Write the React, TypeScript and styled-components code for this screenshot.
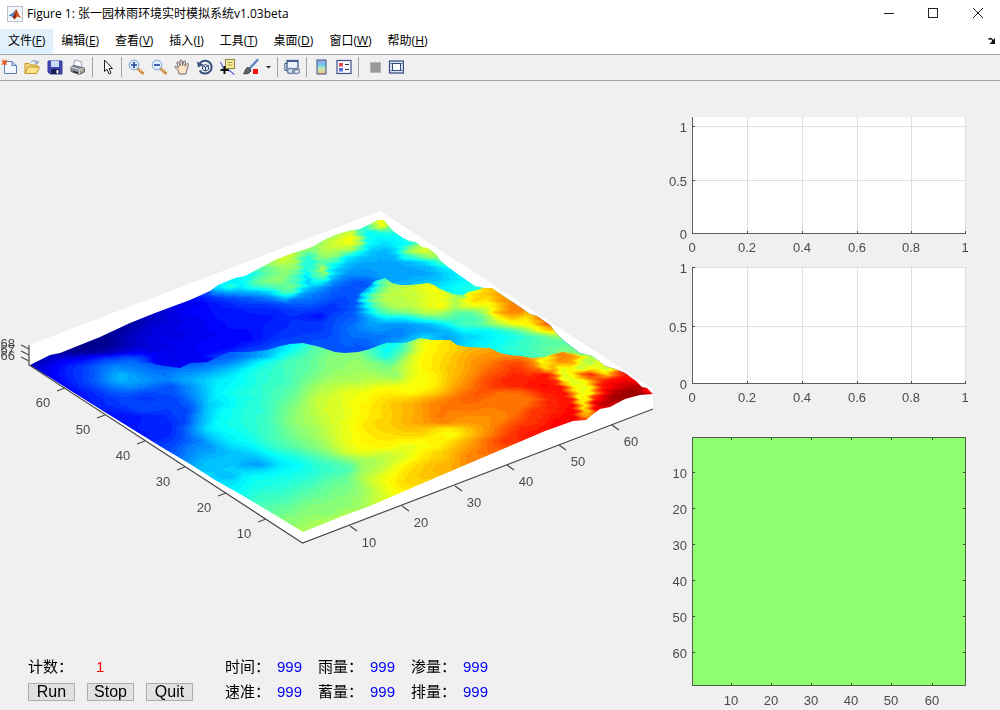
import React, { useLayoutEffect, useRef } from "react";
import styled, { createGlobalStyle } from "styled-components";

const GlobalStyle = createGlobalStyle`
  *, *::before, *::after { box-sizing: border-box; }
  body {
    margin: 0;
    background: #f0f0f0;
    color: #000;
    font-family: "Open Sans", "Noto Sans CJK SC", sans-serif;
    font-size: 12px;
  }
`;

/* ---------- window chrome ---------- */

const TitleBar = styled.header`
  display: flex;
  align-items: center;
  height: 28px;
  padding-left: 7px;
  background: #fff;
`;

const WindowTitle = styled.h1`
  flex: 1;
  margin: 0 0 0 4px;
  font-size: 12px;
  font-weight: 400;
  line-height: 16px;
  white-space: nowrap;
`;

const WindowButton = styled.button`
  display: grid;
  place-items: center;
  align-self: flex-start;
  width: 45px;
  height: 26px;
  padding: 0;
  border: 0;
  background: transparent;
`;

const MenuBar = styled.nav`
  display: flex;
  align-items: center;
  height: 27px;
  background: #fff;
  border-bottom: 1px solid #a8a8a8;
`;

const MenuItem = styled.button<{ $active?: boolean }>`
  height: 25px;
  padding: 0 8px;
  border: 0;
  background: ${(p) => (p.$active ? "#e0f0fd" : "transparent")};
  color: #000;
  font: inherit;
  line-height: 16px;
  white-space: nowrap;
`;

const DockButton = styled.button`
  display: grid;
  place-items: center;
  width: 16px;
  height: 16px;
  margin-left: auto;
  padding: 0;
  border: 0;
  background: transparent;
`;

const ToolBar = styled.div`
  display: flex;
  align-items: center;
  gap: 7px;
  height: 26px;
  padding: 0 0 2px 1px;
  border-bottom: 1px solid #a0a0a0;
`;

const ToolButton = styled.button<{ $narrow?: boolean }>`
  display: grid;
  place-items: center;
  width: ${(p) => (p.$narrow ? 5 : 16)}px;
  height: 20px;
  padding: 0;
  border: 0;
  background: transparent;
`;

const Separator = styled.span`
  width: 1px;
  height: 20px;
  margin: 0 -1px;
  background: #a5a5a5;
`;

/* ---------- figure ---------- */

const Figure = styled.main`
  display: grid;
  grid-template-columns: 33fr 17fr;
  align-items: start;
`;

const Column = styled.div`
  display: flex;
  flex-direction: column;
  min-width: 0;
`;

const SurfacePlot = styled.div`
  display: grid;

  > * {
    grid-area: 1 / 1;
    display: block;
    width: 100%;
    height: auto;
  }
`;

const Drawing = styled.svg`
  display: block;
  width: 100%;
  height: auto;
`;

const Tick = styled.text`
  fill: #4a4a4a;
  font-family: "Liberation Sans", Arial, sans-serif;
  font-size: 13px;
`;

const Panel = styled.section`
  display: flex;
  gap: 32px;
  padding: 13px 0 0 28px;
  font-family: "Liberation Sans", "Noto Sans CJK SC", sans-serif;
  font-size: 15px;
  line-height: 18px;
`;

const Controls = styled.div`
  display: grid;
  grid-template-rows: 25px 25px;
  align-items: center;
`;

const ButtonRow = styled.div`
  display: flex;
  gap: 12px;
`;

const PushButton = styled.button`
  width: 47px;
  height: 18px;
  padding: 0;
  border: 1px solid #adadad;
  background: #e1e1e1;
  color: #000;
  font: 16px/16px "Liberation Sans", Arial, sans-serif;
`;

const Readouts = styled.div`
  display: grid;
  grid-template: 25px 25px / repeat(3, 93px);
  align-items: center;
`;

const Readout = styled.label<{ $wide?: boolean }>`
  display: grid;
  grid-template-columns: ${(p) => (p.$wide ? 68 : 52)}px auto;
  justify-content: start;
  white-space: nowrap;
`;

const Value = styled.output<{ $tone: string }>`
  color: ${(p) => p.$tone};
`;

/* ---------- terrain data ---------- */

type Sample = [number, number];
type Field = [number, Sample[]][];

const parse = (rows: string): Field =>
  rows
    .trim()
    .split("\n")
    .map((line) => {
      const [y, rest] = line.trim().split("|");
      const samples = rest
        .trim()
        .split(" ")
        .map((pair) => pair.split(",").map(Number) as Sample);
      return [Number(y), samples];
    });

/* Each line: y | x,height x,height ... with the height in percent of the range. */
const BACK = parse(`
220| 375,55 381,62 386,58
226| 365,42 375,55 381,62 388,52 395,42
232| 335,52 345,56 352,57 358,45 368,38 385,42 395,40
238| 320,52 335,57 350,62 358,56 366,40 380,37 400,38 408,40
244| 312,54 318,52 330,58 350,60 360,52 367,38 385,35 405,37 415,47 420,52
250| 295,56 305,52 315,50 320,55 335,54 350,52 358,42 370,33 385,31 395,34 403,44 410,55 425,60 430,56
256| 275,57 290,58 300,48 308,42 318,50 325,52 338,48 345,38 360,33 380,30 395,31 402,38 415,45 430,55 437,52
262| 268,52 280,57 295,54 303,42 312,40 318,46 325,44 335,40 345,33 360,30 380,29 400,29 415,31 430,37 440,45
268| 258,44 270,48 285,53 297,50 305,40 315,44 322,56 328,40 335,33 350,29 375,28 400,28 425,30 445,36
274| 248,37 258,42 270,48 285,52 298,44 306,36 313,44 325,50 330,36 345,27 365,27 385,28 402,29 425,29 445,33 460,36
280| 235,36 245,38 255,46 265,50 280,52 290,46 300,42 307,32 315,40 325,38 332,28 345,24 355,22 365,22 380,27 420,31 450,34 470,37
286| 218,36 230,42 240,35 252,42 262,44 280,47 292,50 303,38 310,32 318,30 325,26 340,22 355,21 375,22 400,31 430,34 455,37 480,42
292| 208,20 215,28 235,28 255,30 270,34 283,45 292,44 302,30 315,24 330,22 355,21 400,32 440,36 460,38 480,40
298| 195,14 220,18 250,21 275,27 285,31 295,25 320,22 340,20 355,21 450,37
304| 180,10 210,14 240,17 280,20 310,21 330,18 355,21
310| 165,8 190,13 230,14 260,16 300,18 330,17 355,22
316| 150,6 175,10 190,12 230,14 290,16 320,14 330,19 355,22
322| 135,4 160,8 185,11 230,13 260,15 310,17 325,19 355,23
328| 120,3 145,7 175,11 230,13 270,16 310,17 355,24
334| 105,2 130,6 165,10 230,12 260,15 300,18 330,20 355,23
340| 90,1 110,3 135,7 165,11 230,12 250,14 280,18 310,20 355,22
346| 75,0 95,1 115,4 140,8 175,11 225,12 250,17 290,20 355,21
352| 50,5 60,3 75,2 100,5 130,10 160,11 210,12 225,16 250,20 290,20 355,20
356| 42,6 60,6 80,9 105,15 125,18 140,17 152,13 170,11 200,11 215,18
360| 36,5 55,9 80,14 105,20 130,22 145,18 155,12 175,10 190,11
366| 30,6 45,10 65,14 90,20 110,24 130,24 150,21 158,12 180,11
`);

const MIDDLE = parse(`
276| 355,22 370,30 385,46 395,50
282| 355,22 370,27 378,42 388,50 395,53 410,56 420,59 430,61 440,60
288| 355,21 368,28 376,42 390,54 405,57 425,61 435,62 443,58 460,45 470,60 480,66 487,68 500,70
294| 355,21 362,32 372,46 385,55 405,57 430,60 440,61 450,57 462,48 468,62 480,67 500,72 508,72
300| 355,21 363,36 372,48 385,55 410,57 430,61 445,60 455,54 465,62 475,67 487,65 500,72 512,73 520,72
306| 355,21 367,36 377,47 390,54 410,56 430,60 443,61 455,54 462,58 472,60 485,60 498,66 510,74 525,75
312| 355,22 367,32 378,42 390,48 410,51 425,56 440,54 455,48 470,47 485,54 495,67 505,73 520,74 530,68 540,76 545,78
318| 355,22 370,28 385,36 405,36 425,43 440,46 460,44 480,46 490,54 500,62 512,68 525,64 535,72 550,80
324| 355,24 370,28 390,28 410,28 430,30 445,36 460,44 480,46 500,54 515,61 530,64 545,76 553,77
330| 355,24 375,27 400,26 430,28 450,32 465,38 490,37 505,42 520,48 540,62 550,68 560,66
336| 355,23 380,24 400,26 425,33 445,29 465,33 490,36 505,38 520,42 540,46 560,52 567,50
342| 355,21 375,24 390,28 405,32 450,30 470,35 500,38 520,43 545,45 575,46
348| 355,20 370,22 400,30 450,33 480,36 510,42 535,45 560,48 580,50
354| 355,20 500,38 530,44 550,46 560,52 590,50
`);

const FRONT = parse(`
338| 200,20 290,34 303,38 345,44 370,42 387,40 400,42 412,50 420,55 435,62 450,66 460,66
344| 190,20 270,28 290,36 303,41 320,47 345,49 375,42 395,38 405,46 415,56 425,62 440,65 455,68 470,68
350| 190,20 225,22 250,26 275,32 290,38 310,46 330,49 357,50 370,45 387,38 403,45 417,58 430,63 446,66 465,69 490,72 500,72 540,66 550,70 563,74 575,66 585,54
356| 190,20 215,21 240,24 265,30 285,40 300,45 330,50 357,51 370,47 385,40 398,46 410,57 420,62 440,66 455,69 480,72 500,74 520,75 530,72 540,66 545,62 550,66 560,75 570,74 578,68 585,58 592,54
362| 36,7 60,12 90,20 115,24 140,22 160,20 175,20 200,21 225,25 245,31 262,38 290,45 337,51 358,52 375,50 391,46 404,55 421,63 440,66 455,69 484,74 505,80 520,80 533,74 540,62 550,66 560,73 572,72 580,60 588,54 598,60 603,64
368| 36,8 60,13 90,21 115,26 140,24 165,23 190,24 207,26 230,32 248,37 278,43 320,49 358,53 387,50 404,56 421,63 442,67 467,71 492,78 513,83 525,80 538,75 545,64 553,70 560,60 570,64 580,56 590,63 597,60 605,56 612,62 620,76
374| 42,10 70,16 95,22 120,30 145,26 165,25 190,27 215,32 240,38 278,43 320,50 362,55 396,51 408,58 421,62 442,66 471,73 492,80 513,84 530,82 543,86 550,82 556,72 563,58 573,66 580,78 590,84 600,72 606,66 613,76 622,85 632,84
380| 52,11 75,17 100,24 120,30 140,28 165,25 190,29 215,36 252,39 295,46 328,53 366,56 396,55 412,61 438,65 463,72 484,80 505,85 526,84 547,86 556,82 562,64 572,58 582,62 590,72 600,82 612,87 625,89 638,87
386| 62,12 80,17 105,22 130,27 150,24 170,20 190,26 213,36 252,40 295,47 320,54 349,58 379,60 403,62 421,62 442,67 463,73 480,79 497,83 522,84 545,87 560,86 567,74 572,63 585,60 592,68 600,84 612,88 625,94 640,96 643,87
392| 72,13 90,16 110,20 130,22 150,20 170,20 192,26 215,37 261,42 295,48 320,55 345,60 379,63 412,63 434,67 455,73 475,79 488,80 497,77 522,77 543,85 563,87 572,72 580,60 590,62 596,76 605,88 615,95 630,99 640,96 648,88 653,80
398| 82,14 100,16 125,19 150,18 175,19 192,25 213,36 252,40 295,49 320,57 349,61 379,64 404,67 429,71 455,76 476,79 490,77 505,76 530,76 547,84 564,87 572,82 578,62 587,64 593,84 600,88 610,96 620,98 630,96
404| 90,14 110,17 135,20 155,20 175,18 192,23 208,33 252,41 295,50 320,57 354,62 379,65 404,70 438,75 471,77 497,76 525,76 535,80 547,84 572,87 578,72 583,62 589,76 595,90 605,95 615,92
410| 100,14 125,17 145,20 165,17 188,20 206,32 219,37 261,42 295,51 324,58 358,62 383,66 412,71 442,75 471,76 505,75 518,76 530,82 551,84 572,88 578,80 583,66 588,68 594,84 600,88
416| 110,14 140,15 165,16 185,20 202,31 219,37 261,43 295,51 328,58 358,62 383,66 412,71 438,75 467,74 505,74 516,77 528,82 555,86 573,88 580,76 586,72
422| 118,15 150,15 170,16 185,20 198,29 215,37 261,43 295,51 328,58 358,63 383,67 412,71 442,74 463,73 484,73 500,75 513,79 530,83 555,87 570,88
428| 128,15 155,15 170,16 184,22 206,35 227,38 269,44 303,51 332,58 358,63 379,66 405,69 425,68 446,64 467,69 488,73 505,79 522,84 550,87
434| 140,14 162,15 181,20 206,32 230,37 269,44 303,51 328,57 358,62 383,66 403,67 421,66 450,61 467,68 492,75 509,82 530,86
440| 150,15 162,17 177,20 200,25 212,31 235,37 269,43 303,49 332,57 362,63 391,65 421,62 446,64 467,71 492,78 505,83 525,84
446| 160,18 175,21 189,25 210,27 227,33 269,41 311,50 337,57 362,62 387,64 408,59 434,63 459,70 484,76 505,80
452| 168,20 185,25 207,28 230,31 261,36 295,43 324,50 345,57 366,61 387,58 412,60 429,65 455,71 480,76 495,77
458| 178,24 200,29 231,33 250,31 261,32 290,39 324,46 345,50 358,54 380,56 400,58 421,64 446,69 467,74 480,74
464| 190,28 210,32 232,33 245,29 260,28 278,34 300,39 316,42 335,44 350,47 362,53 391,58 412,65 440,70 465,73
470| 200,31 212,32 232,34 250,33 262,34 295,39 325,42 349,45 362,53 387,59 412,66 442,71
476| 208,34 223,31 232,32 242,36 270,38 300,41 330,44 345,47 362,55 379,60 404,65 425,69
482| 218,35 236,36 261,39 316,44 349,49 366,56 379,60 400,65 421,67
488| 228,36 252,39 300,44 335,48 358,52 375,57 391,62 408,65
494| 240,39 261,42 316,47 345,50 360,53 379,57 400,62
500| 250,42 280,45 320,49 350,52 370,55 388,60
506| 260,45 290,48 330,51 355,52 375,57
512| 270,47 300,50 330,51 343,54 360,55
518| 280,50 300,51 325,53 340,57
524| 290,51 303,52 320,55
530| 298,53 303,54 308,55
`);

const OUTLINE =
  "M30 365 L40 360 50 355 60 353 75 347 100 337 130 323 155 313 190 300 210 291 218 285 235 278 245 276 258 269 275 260 290 254 312 247 322 241 335 235 348 231 360 229 372 223 378 220 384 220 388 225 393 231 403 238 410 241 416 242 422 247 428 248 436 254 440 260 448 267 462 277 475 286 485 288 492 288 505 297 520 307 530 314 537 316 550 325 556 333 564 341 580 353 592 356 600 362 605 366 615 369 625 373 636 381 642 387 647 388 653 394 640 395 625 399 610 407 600 409 592 415 586 420 573 421 545 431 510 446 470 463 430 480 400 493 370 506 340 517 303 532 270 512 240 494 215 480 190 464 163 448 103 411Z";

const MIDDLE_EDGE =
  "M355 302 L360 294 375 281 385 278 392 283 400 285 410 285 420 284 428 283 434 285 440 289 453 294 463 295 468 292 478 290 487 286 520 286 700 440 355 440Z";

const FRONT_EDGE =
  "M20 366 L150 363 165 366 180 368 190 363 207 362 222 355 230 352 250 352 267 350 280 346 290 344 303 343 320 347 335 352 345 353 358 352 370 349 380 345 387 343 405 343 420 338 432 340 450 340 457 345 467 347 490 348 500 353 510 355 520 356 533 358 545 357 550 355 563 352 575 354 582 356 590 352 700 352 700 560 20 560Z";

const TOP = 81;
const PLOT_WIDTH = 660;
const PLOT_HEIGHT = 560;

function alongRow(row: Sample[], x: number) {
  if (x <= row[0][0]) return row[0][1];
  for (let i = 1; i < row.length; i++) {
    const [x1, v1] = row[i];
    if (x <= x1) {
      const [x0, v0] = row[i - 1];
      return v0 + ((v1 - v0) * (x - x0)) / (x1 - x0);
    }
  }
  return row[row.length - 1][1];
}

function heightAt(field: Field, x: number, y: number) {
  let i = 1;
  while (i < field.length - 1 && y > field[i][0]) i++;
  const [y0, a] = field[i - 1];
  const [y1, b] = field[i];
  const t = Math.min(1, Math.max(0, (y - y0) / (y1 - y0)));
  return alongRow(a, x) * (1 - t) + alongRow(b, x) * t;
}

/* The 64-step jet colour map. */
function jet(percent: number) {
  const step = Math.min(63, Math.max(0, Math.round((percent / 100) * 63))) / 63;
  const channel = (centre: number) =>
    Math.round(255 * Math.min(1, Math.max(0, 1.5 - Math.abs(4 * step - centre))));
  return [channel(3), channel(2), channel(1)];
}

function paintField(field: Field) {
  const layer = document.createElement("canvas");
  layer.width = PLOT_WIDTH;
  layer.height = PLOT_HEIGHT;
  const context = layer.getContext("2d")!;
  const image = context.createImageData(PLOT_WIDTH, PLOT_HEIGHT);
  const first = field[0][0] - 10;
  const last = field[field.length - 1][0] + 10;
  for (let y = first; y < last; y++) {
    /* Grid facets give steep slopes a serrated edge. */
    const facet = Math.abs((y % 6) - 3) - 1.5;
    for (let x = 0; x < PLOT_WIDTH; x++) {
      const serration = y < 315 || x > 535 ? 1.3 : 0.2;
      const ripple = Math.sin(x / 11 + y / 17) * 0.5 + Math.sin(x / 6 - y / 9) * 0.2;
      const [r, g, b] = jet(heightAt(field, x + facet * serration, y) + ripple);
      const at = ((y - TOP) * PLOT_WIDTH + x) * 4;
      image.data[at] = r;
      image.data[at + 1] = g;
      image.data[at + 2] = b;
      image.data[at + 3] = 255;
    }
  }
  context.putImageData(image, 0, 0);
  return layer;
}

function Terrain() {
  const ref = useRef<HTMLCanvasElement>(null);
  useLayoutEffect(() => {
    const context = ref.current!.getContext("2d")!;
    context.clearRect(0, 0, PLOT_WIDTH, PLOT_HEIGHT);
    context.save();
    context.translate(0, -TOP);
    context.fillStyle = "#fff";
    context.fill(new Path2D("M29 345 L380 211 653 389 653 409 302 543 29 365Z"));
    context.clip(new Path2D(OUTLINE));
    context.drawImage(paintField(BACK), 0, TOP);
    const patches: [Field, string][] = [
      [MIDDLE, MIDDLE_EDGE],
      [FRONT, FRONT_EDGE],
    ];
    patches.forEach(([field, edge]) => {
      context.save();
      context.clip(new Path2D(edge));
      context.drawImage(paintField(field), 0, TOP);
      context.restore();
    });
    context.restore();
  }, []);
  return <canvas ref={ref} width={PLOT_WIDTH} height={PLOT_HEIGHT} />;
}

const leftTicks = [[65, 388], [105, 415], [145, 441], [185, 467], [226, 493], [266, 519]];
const rightTicks = [[350, 526], [402, 506], [455, 486], [507, 465], [559, 445], [612, 425]];

function SurfaceAxes() {
  return (
    <svg viewBox={`0 ${TOP} ${PLOT_WIDTH} ${PLOT_HEIGHT}`} role="img" aria-label="Terrain surface">
      <g stroke="#4a4a4a" strokeWidth="1.2" fill="none">
        <path d="M29 345V365L302.500 543L653 409" />
        {[349, 355, 361].map((y) => (
          <path key={y} d={`M29 ${y}l-8 -4`} />
        ))}
        {leftTicks.map(([x, y]) => (
          <path key={x} d={`M${x} ${y}l-8 3`} />
        ))}
        {rightTicks.map(([x, y]) => (
          <path key={x} d={`M${x} ${y}l7 5`} />
        ))}
      </g>
      {[68, 67, 66].map((z, i) => (
        <Tick key={z} x={15} y={348 + i * 6} textAnchor="end">{z}</Tick>
      ))}
      {leftTicks.map(([x, y], i) => (
        <Tick key={x} x={x - 22} y={y + 19} textAnchor="middle">{60 - i * 10}</Tick>
      ))}
      {rightTicks.map(([x, y], i) => (
        <Tick key={x} x={x + 19} y={y + 21} textAnchor="middle">{10 + i * 10}</Tick>
      ))}
    </svg>
  );
}

/* ---------- side charts ---------- */

interface LineChartProps {
  name: string;
  top: number;
  height: number;
  plotTop: number;
  yTicks: [string, number][];
}

const xTicks: [string, number][] = [
  ["0", 32], ["0.2", 87], ["0.4", 142], ["0.6", 197], ["0.8", 251], ["1", 305],
];

function LineChart({ name, top, height, plotTop, yTicks }: LineChartProps) {
  const base = yTicks[0][1];
  return (
    <Drawing viewBox={`0 ${top} 340 ${height}`} role="img" aria-label={name}>
      <rect x="33" y={plotTop} width="273" height={base - plotTop} fill="#fff" />
      <g shapeRendering="crispEdges">
        {xTicks.slice(1).map(([label, x]) => (
          <g key={label}>
            <rect x={x} y={plotTop} width="1" height={base - plotTop} fill="#dfdfdf" />
            <rect x={x} y={base - 2} width="1" height="2" fill="#4a4a4a" />
          </g>
        ))}
        {yTicks.slice(1).map(([label, y]) => (
          <g key={label}>
            <rect x="33" y={y} width="273" height="1" fill="#dfdfdf" />
            <rect x="33" y={y} width="2" height="1" fill="#4a4a4a" />
          </g>
        ))}
        <rect x="32" y={plotTop} width="1" height={base - plotTop} fill="#5c5c5c" />
        <rect x="32" y={base} width="274" height="1" fill="#5c5c5c" />
      </g>
      {xTicks.map(([label, x]) => (
        <Tick key={label} x={x} y={base + 19} textAnchor="middle">{label}</Tick>
      ))}
      {yTicks.map(([label, y]) => (
        <Tick key={label} x={27} y={y + 6} textAnchor="end">{label}</Tick>
      ))}
    </Drawing>
  );
}

const mapX = [71, 111, 151, 191, 231, 272];
const mapY = [472, 508, 544, 580, 616, 652];

function WaterMap() {
  return (
    <Drawing viewBox="0 421 340 289" role="img" aria-label="Water depth map">
      <g shapeRendering="crispEdges">
        <rect x="32" y="437" width="274" height="249" fill="#4f5f48" />
        <rect x="33" y="438" width="272" height="247" fill="#8fff70" />
        {mapX.map((x) => (
          <g key={x} fill="#3a4a34">
            <rect x={x} y="438" width="1" height="2" />
            <rect x={x} y="683" width="1" height="2" />
          </g>
        ))}
        {mapY.map((y) => (
          <g key={y} fill="#3a4a34">
            <rect x="33" y={y} width="2" height="1" />
            <rect x="303" y={y} width="2" height="1" />
          </g>
        ))}
      </g>
      {mapX.map((x, i) => (
        <Tick key={x} x={x} y={705} textAnchor="middle">{(i + 1) * 10}</Tick>
      ))}
      {mapY.map((y, i) => (
        <Tick key={y} x={27} y={y + 6} textAnchor="end">{(i + 1) * 10}</Tick>
      ))}
    </Drawing>
  );
}

/* ---------- icons ---------- */

const Glyph = ({ children, width = 16 }: { children: React.ReactNode; width?: number }) => (
  <svg width={width} height="16" viewBox={`0 0 ${width} 16`} fill="none" aria-hidden="true">
    {children}
  </svg>
);

const icons: Record<string, React.ReactNode> = {
  new: (
    <Glyph>
      <path d="M3.500 2.500H11L15.500 6.500V14.500H3.500Z" fill="#f3f8ff" stroke="#5a7fb0" />
      <path d="M11 2.500V6.500H15" fill="#c9dcf5" stroke="#5a7fb0" />
      <path d="M0.500 0.500L6 6M6 0.500L0.500 6" stroke="#f0a070" strokeWidth="1.200" />
      <rect x="1.500" y="1.500" width="4" height="4" fill="#e35b25" />
    </Glyph>
  ),
  open: (
    <Glyph>
      <path d="M1 14V4.500H5L6.500 6H13V8" fill="#f4d878" stroke="#c69425" />
      <path d="M1 14.500L4 8H15.500L12.500 14.500Z" fill="#fde48a" stroke="#c69425" />
      <path d="M7 3.500C9 .5 12 1 13 4M10.500 3.500L13.500 4.500L14.500 1.500" stroke="#6787b5" />
    </Glyph>
  ),
  save: (
    <Glyph>
      <path d="M1 2H15V15H3L1 13Z" fill="#3f46b0" stroke="#343a9c" />
      <rect x="4" y="2" width="8" height="6" fill="#c9dcf7" />
      <rect x="4.500" y="10" width="8" height="5" fill="#171b4d" />
      <rect x="9.500" y="11" width="2" height="3.500" fill="#fff" />
    </Glyph>
  ),
  print: (
    <Glyph>
      <path d="M3 8L5 1L11 2.500L12 8" fill="#fafcff" stroke="#9aa3b0" />
      <path d="M1 8L4 6.500L14.500 9V13L9.500 15.500L1 12.500Z" fill="#8d929b" stroke="#62666e" />
      <path d="M1 8L9.500 10.500L14.500 9M9.500 10.500V15" stroke="#d4d7dc" />
      <path d="M3 12.500L8 14" stroke="#2e3036" strokeWidth="1.500" />
      <rect x="11" y="11" width="2" height="1" fill="#e8d344" />
    </Glyph>
  ),
  pointer: (
    <Glyph>
      <path d="M5.500 1V12.500L8 10.200L10 15L12 14L10 9.500H13.500Z" fill="#fff" stroke="#222" strokeLinejoin="round" />
    </Glyph>
  ),
  zoomIn: (
    <Glyph>
      <path d="M9.500 9.500L14.500 14" stroke="#c88a3b" strokeWidth="3" strokeLinecap="round" />
      <path d="M10 9.500L14 13" stroke="#f0c47a" />
      <circle cx="6" cy="6" r="4.800" fill="#dceeff" stroke="#7fa5cf" />
      <path d="M3 6H9M6 3V9" stroke="#31479c" strokeWidth="1.700" />
    </Glyph>
  ),
  zoomOut: (
    <Glyph>
      <path d="M9.500 9.500L14.500 14" stroke="#c88a3b" strokeWidth="3" strokeLinecap="round" />
      <path d="M10 9.500L14 13" stroke="#f0c47a" />
      <circle cx="6" cy="6" r="4.800" fill="#dceeff" stroke="#7fa5cf" />
      <path d="M3 6H9" stroke="#31479c" strokeWidth="1.700" />
    </Glyph>
  ),
  pan: (
    <Glyph>
      <path
        d="M5 15L4.500 12L1 8.500C.5 7.300 1.500 6.800 2.500 7.500L4.500 9L2.800 4C2.800 2.500 4.300 2.500 4.800 3.800L6.200 7L6 2C6.200.6 7.900.7 8.100 2L8.600 6.700L9.700 2.500C10.200 1.300 11.700 1.700 11.500 3L10.900 7.200L12.800 4.800C13.800 3.900 15 4.700 14.400 5.900L12.500 12L12 15Z"
        fill="#ffe3c4"
        stroke="#6f6b78"
      />
    </Glyph>
  ),
  rotate: (
    <Glyph>
      <path d="M3 4.500C5.500.5 12 .8 14 5.500C16 10.500 12 15 7.500 14.500C5 14.200 3.500 13 2.800 11.500" stroke="#3b527f" strokeWidth="2" />
      <path d="M0 2.500L1 8.500L6.500 5.800Z" fill="#3b527f" />
      <path d="M5.500 6.800L8.500 5.500L11.500 6.800V10.500L8.500 12L5.500 10.500ZM5.500 6.800L8.500 8L11.500 6.800M8.500 8V12" fill="#dce8f7" stroke="#3b527f" />
    </Glyph>
  ),
  dataCursor: (
    <Glyph>
      <rect x="5.500" y="0.500" width="9" height="9" fill="#f3eb9c" stroke="#8f8642" />
      <path d="M7.500 3.500H12.500M7.500 6H12.500" stroke="#a69a4a" />
      <path d="M0 3C3 5 2 12 7 11.500S11 14 14.500 15.500" stroke="#5964e0" strokeWidth="1.200" />
      <path d="M4.500 7V15M0.500 11H9" stroke="#111" strokeWidth="2" />
    </Glyph>
  ),
  brush: (
    <Glyph>
      <path d="M7 9L14.500 1" stroke="#6586ba" strokeWidth="2.500" strokeLinecap="round" />
      <path d="M0.500 14.500C2.500 13.500 1.500 9.500 5 8.500L8 11C7.500 14 4 15.500 .5 14.500Z" fill="#62656d" stroke="#34363c" />
      <rect x="10" y="10" width="5" height="5" fill="#f50f0f" />
    </Glyph>
  ),
  arrow: (
    <Glyph width={5}>
      <path d="M0 7H5L2.500 9.500Z" fill="#222" />
    </Glyph>
  ),
  link: (
    <Glyph>
      <rect x="3" y="1.500" width="11" height="9" fill="#eaf1fb" stroke="#425a8c" strokeWidth="1.300" />
      <path d="M3 2.500H14" stroke="#425a8c" />
      <path d="M3 4.500H0.800V11.500H4" stroke="#425a8c" />
      <rect x="3.500" y="9.500" width="7" height="5" rx="2.500" fill="#dfe6ef" stroke="#6e86a8" strokeWidth="1.500" />
      <rect x="8.500" y="9.500" width="7" height="5" rx="2.500" stroke="#7d93b1" strokeWidth="1.500" />
    </Glyph>
  ),
  colorbar: (
    <Glyph>
      <defs>
        <linearGradient id="bar" x1="0" x2="0" y1="0" y2="1">
          <stop offset="0" stopColor="#aaa2ee" />
          <stop offset="0.350" stopColor="#6ccbea" />
          <stop offset="0.650" stopColor="#c8eeb4" />
          <stop offset="1" stopColor="#f5b67e" />
        </linearGradient>
      </defs>
      <rect x="4" y="1" width="9" height="14" fill="url(#bar)" stroke="#3d5080" />
    </Glyph>
  ),
  legend: (
    <Glyph>
      <rect x="1" y="1.500" width="14" height="13" fill="#f5f8ff" stroke="#3d5080" strokeWidth="1.200" />
      <rect x="3" y="4" width="4" height="3.500" fill="#e04848" />
      <rect x="3" y="9" width="4" height="3.500" fill="#5667d8" />
      <path d="M9 5.500H13M9 10.500H13" stroke="#333" strokeWidth="1.200" />
    </Glyph>
  ),
  hideTools: (
    <Glyph>
      <rect x="5.500" y="3.500" width="10" height="10" fill="#999" stroke="#b4b4b4" />
    </Glyph>
  ),
  showTools: (
    <Glyph>
      <rect x="1.500" y="2" width="14" height="12" fill="#dbe4f3" stroke="#34497c" strokeWidth="1.200" />
      <path d="M1.500 4.500H15.500M1.500 11.500H15.500" stroke="#7486ac" />
      <rect x="4.500" y="4.500" width="8" height="7" fill="#fff" stroke="#34497c" />
    </Glyph>
  ),
};

const toolGroups: [string, string][][] = [
  [["new", "New"], ["open", "Open"], ["save", "Save"], ["print", "Print"]],
  [["pointer", "Edit plot"]],
  [
    ["zoomIn", "Zoom in"], ["zoomOut", "Zoom out"], ["pan", "Pan"], ["rotate", "Rotate 3D"],
    ["dataCursor", "Data cursor"], ["brush", "Brush"], ["arrow", "Brush options"],
  ],
  [["link", "Link plot"]],
  [["colorbar", "Insert colorbar"], ["legend", "Insert legend"]],
  [["hideTools", "Hide plot tools"], ["showTools", "Show plot tools"]],
];

const menus = [
  ["文件", "F"], ["编辑", "E"], ["查看", "V"], ["插入", "I"],
  ["工具", "T"], ["桌面", "D"], ["窗口", "W"], ["帮助", "H"],
];

const readouts = ["时间", "雨量", "渗量", "速准", "蓄量", "排量"];

export default function App() {
  return (
    <>
      <GlobalStyle />
      <TitleBar>
        <Glyph>
          <rect x="0.500" y="0.500" width="15" height="15" fill="#f4f7fb" stroke="#b9c3cf" />
          <path d="M1.500 9.500L6 7L9 3L6.800 11.500L4.500 10.500Z" fill="#3c7fc0" />
          <path d="M9 3C10.500 4 11.500 9 14.500 12L10.500 10.500L7.500 13.500L5.800 11Z" fill="#d9541c" />
          <path d="M9 3C9.300 6 8.500 9 5.800 11L7.500 13.500C9.500 11 10 6 9 3Z" fill="#7c2418" />
        </Glyph>
        <WindowTitle>Figure 1: 张一园林雨环境实时模拟系统v1.03beta</WindowTitle>
        <WindowButton aria-label="Minimize">
          <Glyph><path d="M4 8.500H14" stroke="#222" /></Glyph>
        </WindowButton>
        <WindowButton aria-label="Maximize">
          <Glyph><rect x="3.500" y="3.500" width="9" height="9" stroke="#222" /></Glyph>
        </WindowButton>
        <WindowButton aria-label="Close">
          <Glyph><path d="M3 3L13 13M13 3L3 13" stroke="#222" /></Glyph>
        </WindowButton>
      </TitleBar>
      <MenuBar>
        {menus.map(([label, key], i) => (
          <MenuItem key={key} $active={i === 0}>
            {label}(<u>{key}</u>)
          </MenuItem>
        ))}
        <DockButton aria-label="Dock figure">
          <svg width="8" height="8" viewBox="0 0 8 8" aria-hidden="true">
            <path d="M0.500 2.500C2.500 .5 4 2 5.500 4.500" fill="none" stroke="#111" strokeWidth="1.500" />
            <path d="M7 1V7H1.500Z" fill="#111" />
          </svg>
        </DockButton>
      </MenuBar>
      <ToolBar role="toolbar" aria-label="Figure tools">
        {toolGroups.map((group, i) => (
          <React.Fragment key={i}>
            {i > 0 && <Separator />}
            {group.map(([icon, label]) => (
              <ToolButton key={icon} aria-label={label} $narrow={icon === "arrow"}>
                {icons[icon]}
              </ToolButton>
            ))}
          </React.Fragment>
        ))}
      </ToolBar>
      <Figure>
        <Column>
          <SurfacePlot>
            <Terrain />
            <SurfaceAxes />
          </SurfacePlot>
          <Panel>
            <Controls>
              <Readout $wide>
                计数：<Value $tone="#f00">1</Value>
              </Readout>
              <ButtonRow>
                <PushButton>Run</PushButton>
                <PushButton>Stop</PushButton>
                <PushButton>Quit</PushButton>
              </ButtonRow>
            </Controls>
            <Readouts>
              {readouts.map((name) => (
                <Readout key={name}>
                  {name}：<Value $tone="#00f">999</Value>
                </Readout>
              ))}
            </Readouts>
          </Panel>
        </Column>
        <Column>
          <LineChart name="Upper chart" top={81} height={177} plotTop={117} yTicks={[["0", 233], ["0.5", 180], ["1", 126]]} />
          <LineChart name="Lower chart" top={258} height={163} plotTop={267} yTicks={[["0", 383], ["0.5", 326], ["1", 267]]} />
          <WaterMap />
        </Column>
      </Figure>
    </>
  );
}
